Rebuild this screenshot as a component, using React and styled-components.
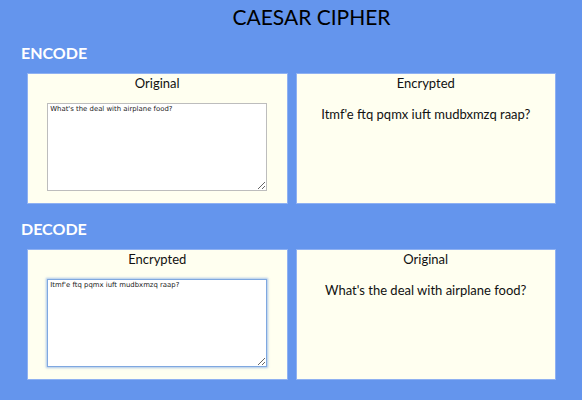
import React, { useState } from 'react';
import styled, { createGlobalStyle } from 'styled-components';

const GlobalStyle = createGlobalStyle`
  html, body {
    margin: 0;
    padding: 0;
    background-color: #6495ed;
    font-family: Lato, "Open Sans", sans-serif;
  }
`;

const Page = styled.div`
  min-height: 100vh;
  padding: 4px 26px 20px 21px;
  box-sizing: border-box;
`;

const Title = styled.h1`
  margin: 0;
  padding-left: 46px;
  text-align: center;
  font-size: 21px;
  font-weight: 400;
  color: #000000;
  line-height: 26px;
`;

const SectionTitle = styled.h2`
  margin: ${props => props.first ? '13px' : '15px'} 0 11px 0;
  font-size: 16px;
  font-weight: 700;
  line-height: 19px;
  color: #ffffff;
`;

const Row = styled.div`
  display: grid;
  grid-template-columns: 1fr 1fr;
  gap: 8px;
  margin-left: 6px;
`;

const Panel = styled.div`
  height: 131px;
  box-sizing: border-box;
  background-color: #fffff0;
  border: 1px solid #8fb1f2;
  display: flex;
  flex-direction: column;
  align-items: center;
`;

const Label = styled.div`
  margin-top: 1px;
  font-size: 13px;
  line-height: 16px;
  color: #111111;
`;

const Input = styled.textarea`
  margin-top: 12px;
  width: 220px;
  height: 88px;
  box-sizing: border-box;
  padding: 1px 2px;
  font-family: "DejaVu Sans", Verdana, sans-serif;
  font-size: 6.9px;
  line-height: 9px;
  color: #222222;
  background: #ffffff;
  border: 1px solid ${props => props.focused ? '#7fa8e0' : '#bdbdbd'};
  box-shadow: ${props => props.focused ? '0 0 2px 1px rgba(100, 150, 230, 0.55)' : 'none'};
  outline: none;
  resize: both;
`;

const Output = styled.p`
  margin: 15px 0 0 0;
  font-size: 13px;
  line-height: 16px;
  color: #111111;
`;

const shift = (text, n) =>
  text.replace(/[a-z]/gi, ch => {
    const base = ch <= 'Z' ? 65 : 97;
    return String.fromCharCode(((ch.charCodeAt(0) - base + n + 26) % 26) + base);
  });

const Section = ({ title, first, inLabel, outLabel, value, onChange, result, focused }) => (
  <>
    <SectionTitle first={first}>{title}</SectionTitle>
    <Row>
      <Panel>
        <Label>{inLabel}</Label>
        <Input value={value} onChange={e => onChange(e.target.value)} focused={focused} spellCheck={false} />
      </Panel>
      <Panel>
        <Label>{outLabel}</Label>
        <Output>{result}</Output>
      </Panel>
    </Row>
  </>
);

const App = () => {
  const [plain, setPlain] = useState("What's the deal with airplane food?");
  const [cipher, setCipher] = useState("Itmf'e ftq pqmx iuft mudbxmzq raap?");

  return (
    <Page>
      <GlobalStyle />
      <Title>CAESAR CIPHER</Title>
      <Section
        title="ENCODE"
        first
        inLabel="Original"
        outLabel="Encrypted"
        value={plain}
        onChange={setPlain}
        result={shift(plain, 12)}
      />
      <Section
        title="DECODE"
        inLabel="Encrypted"
        outLabel="Original"
        value={cipher}
        onChange={setCipher}
        result={shift(cipher, -12)}
        focused
      />
    </Page>
  );
};

export default App;
